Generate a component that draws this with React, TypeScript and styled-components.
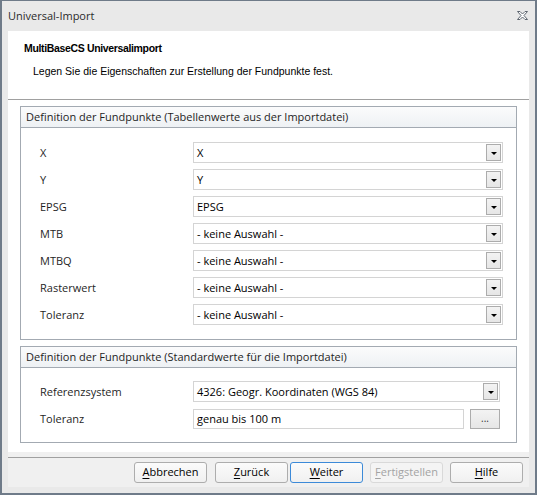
import React from "react";
import styled, { createGlobalStyle, css } from "styled-components";

const GlobalStyle = createGlobalStyle`
  html, body { margin: 0; padding: 0; background: #ffffff; }
  body { font-family: "Open Sans", "Noto Sans", sans-serif; }
  * { box-sizing: border-box; }
`;

const UI = `"Open Sans", "Noto Sans", sans-serif`;
const CLASSIC = `"Liberation Sans", Arial, sans-serif`;

const Window = styled.div`
  width: 537px;
  height: 495px;
  border: 2px solid #6f7b89;
  border-top-width: 1px;
  background: #e9e9e9;
  display: flex;
  flex-direction: column;
`;

const TitleBar = styled.div`
  height: 30px;
  display: flex;
  align-items: center;
  justify-content: space-between;
  padding: 0 7px 1px 6px;
  font-family: ${UI};
  font-size: 11px;
  color: #2b2b2b;
`;

const Client = styled.div`
  flex: 1;
  margin: 0 6px 6px 6px;
  background: #ffffff;
  display: flex;
  flex-direction: column;
`;

const Header = styled.div`
  height: 69px;
  padding: 11px 0 0 16px;
  display: flex;
  flex-direction: column;
  border-bottom: 1px solid #a0a0a0;
`;

const HeaderTitle = styled.div`
  font-family: ${CLASSIC};
  font-weight: bold;
  font-size: 10.5px;
  letter-spacing: -0.35px;
  color: #000;
  line-height: 13px;
`;

const HeaderText = styled.div`
  font-family: ${CLASSIC};
  font-size: 10.5px;
  color: #000;
  line-height: 13px;
  margin: 10px 0 0 9px;
`;

const Content = styled.div`
  flex: 1;
  padding: 6px 12px 0 12px;
  display: flex;
  flex-direction: column;
  gap: 6px;
`;

const Group = styled.div`
  border: 1px solid #a3aab2;
  display: flex;
  flex-direction: column;
`;

const GroupHeader = styled.div`
  height: 21px;
  border-bottom: 1px solid #a3aab2;
  background: linear-gradient(#fbfbfc, #eef1f4);
  padding: 0 0 1px 5px;
  font-family: ${UI};
  font-size: 11px;
  color: #1e1e1e;
  display: flex;
  align-items: center;
`;

const GroupBody = styled.div<{ $pt: number; $pr: number }>`
  padding: ${(p) => p.$pt}px ${(p) => p.$pr}px ${(p) => p.$pt}px 19px;
  display: flex;
  flex-direction: column;
  gap: 6px;
`;

const Row = styled.div`
  display: flex;
  align-items: center;
  height: 21px;
`;

const Label = styled.div`
  width: 153px;
  font-family: ${UI};
  font-size: 11px;
  color: #1f1f1f;
  padding-bottom: 1px;
`;

const fieldBase = css`
  height: 21px;
  border: 1px solid #d4d4d4;
  background: #fff;
  font-family: ${UI};
  font-size: 11px;
  color: #000;
  display: flex;
  align-items: center;
  padding-left: 3px;
`;

const Combo = styled.div`
  ${fieldBase};
  flex: 1;
  justify-content: space-between;
  padding-right: 1px;
`;

const DropButton = styled.div`
  width: 15px;
  height: 17px;
  border: 1px solid #acacac;
  background: linear-gradient(#f3f3f3, #e6e6e6);
  display: flex;
  align-items: center;
  justify-content: center;
`;

const Arrow = styled.div`
  width: 0;
  height: 0;
  border-left: 3px solid transparent;
  border-right: 3px solid transparent;
  border-top: 3px solid #000;
  margin-top: 1px;
`;

const TextBox = styled.div`
  ${fieldBase};
  flex: 1;
  height: 20px;
`;

const DotsButton = styled.div`
  width: 30px;
  height: 20px;
  margin-left: 6px;
  border: 1px solid #acacac;
  background: linear-gradient(#f3f3f3, #e6e6e6);
  font-family: ${UI};
  font-size: 10px;
  color: #333;
  display: flex;
  align-items: center;
  justify-content: center;
  padding-bottom: 2px;
`;

const Spacer = styled.div`
  height: 3px;
  background: #ffffff;
`;

const Footer = styled.div`
  flex: 1;
  background: #f0f0f0;
  border-top: 5px solid #f0f0f0;
  display: flex;
  flex-direction: column;
`;

const FooterLine = styled.div`
  height: 1px;
  background: #a0a0a0;
`;

const ButtonBar = styled.div`
  flex: 1;
  display: flex;
  align-items: center;
  justify-content: flex-end;
  padding: 0 6px 1px 0;
`;

const Button = styled.div<{ $default?: boolean; $disabled?: boolean; $gap: number }>`
  width: 73px;
  height: 21px;
  margin-left: ${(p) => p.$gap}px;
  border: 1px solid ${(p) => (p.$default ? "#3c8ad8" : p.$disabled ? "#d9d9d9" : "#adadad")};
  border-radius: 3px;
  background: ${(p) => (p.$disabled ? "#f4f4f4" : "linear-gradient(#fbfbfb, #f0f0f0)")};
  font-family: ${UI};
  font-size: 11px;
  color: ${(p) => (p.$disabled ? "#a3a3a3" : "#000")};
  display: flex;
  align-items: center;
  justify-content: center;
  padding-bottom: 1px;
  u { text-decoration: underline; text-underline-offset: 2px; }
`;

const CloseIcon = () => (
  <svg width="11" height="9" viewBox="0 0 11 9">
    <path
      d="M0.5 0.5 H3 L5.5 3 L8 0.5 H10.5 L7 4.5 L10.5 8.5 H8 L5.5 6 L3 8.5 H0.5 L4 4.5 Z"
      fill="#ffffff"
      stroke="#5e6670"
      strokeWidth="1"
      strokeLinejoin="miter"
    />
  </svg>
);

const ComboField = ({ value }: { value: string }) => (
  <Combo>
    <span>{value}</span>
    <DropButton>
      <Arrow />
    </DropButton>
  </Combo>
);

const rows1: [string, string][] = [
  ["X", "X"],
  ["Y", "Y"],
  ["EPSG", "EPSG"],
  ["MTB", "- keine Auswahl -"],
  ["MTBQ", "- keine Auswahl -"],
  ["Rasterwert", "- keine Auswahl -"],
  ["Toleranz", "- keine Auswahl -"],
];

export default function App() {
  return (
    <>
      <GlobalStyle />
      <Window>
        <TitleBar>
          <span>Universal-Import</span>
          <CloseIcon />
        </TitleBar>
        <Client>
          <Header>
            <HeaderTitle>MultiBaseCS Universalimport</HeaderTitle>
            <HeaderText>Legen Sie die Eigenschaften zur Erstellung der Fundpunkte fest.</HeaderText>
          </Header>
          <Content>
            <Group>
              <GroupHeader>Definition der Fundpunkte (Tabellenwerte aus der Importdatei)</GroupHeader>
              <GroupBody $pt={14} $pr={13}>
                {rows1.map(([l, v]) => (
                  <Row key={l}>
                    <Label>{l}</Label>
                    <ComboField value={v} />
                  </Row>
                ))}
              </GroupBody>
            </Group>
            <Group>
              <GroupHeader>Definition der Fundpunkte (Standardwerte für die Importdatei)</GroupHeader>
              <GroupBody $pt={13} $pr={16}>
                <Row>
                  <Label>Referenzsystem</Label>
                  <ComboField value="4326: Geogr. Koordinaten (WGS 84)" />
                </Row>
                <Row>
                  <Label>Toleranz</Label>
                  <TextBox>genau bis 100 m</TextBox>
                  <DotsButton>...</DotsButton>
                </Row>
              </GroupBody>
            </Group>
            <Spacer />
          </Content>
          <Footer>
            <FooterLine />
            <ButtonBar>
              <Button $gap={0}><span><u>A</u>bbrechen</span></Button>
              <Button $gap={8}><span><u>Z</u>urück</span></Button>
              <Button $gap={2} $default><span><u>W</u>eiter</span></Button>
              <Button $gap={7} $disabled><span><u>F</u>ertigstellen</span></Button>
              <Button $gap={7}><span><u>H</u>ilfe</span></Button>
            </ButtonBar>
          </Footer>
        </Client>
      </Window>
    </>
  );
}
